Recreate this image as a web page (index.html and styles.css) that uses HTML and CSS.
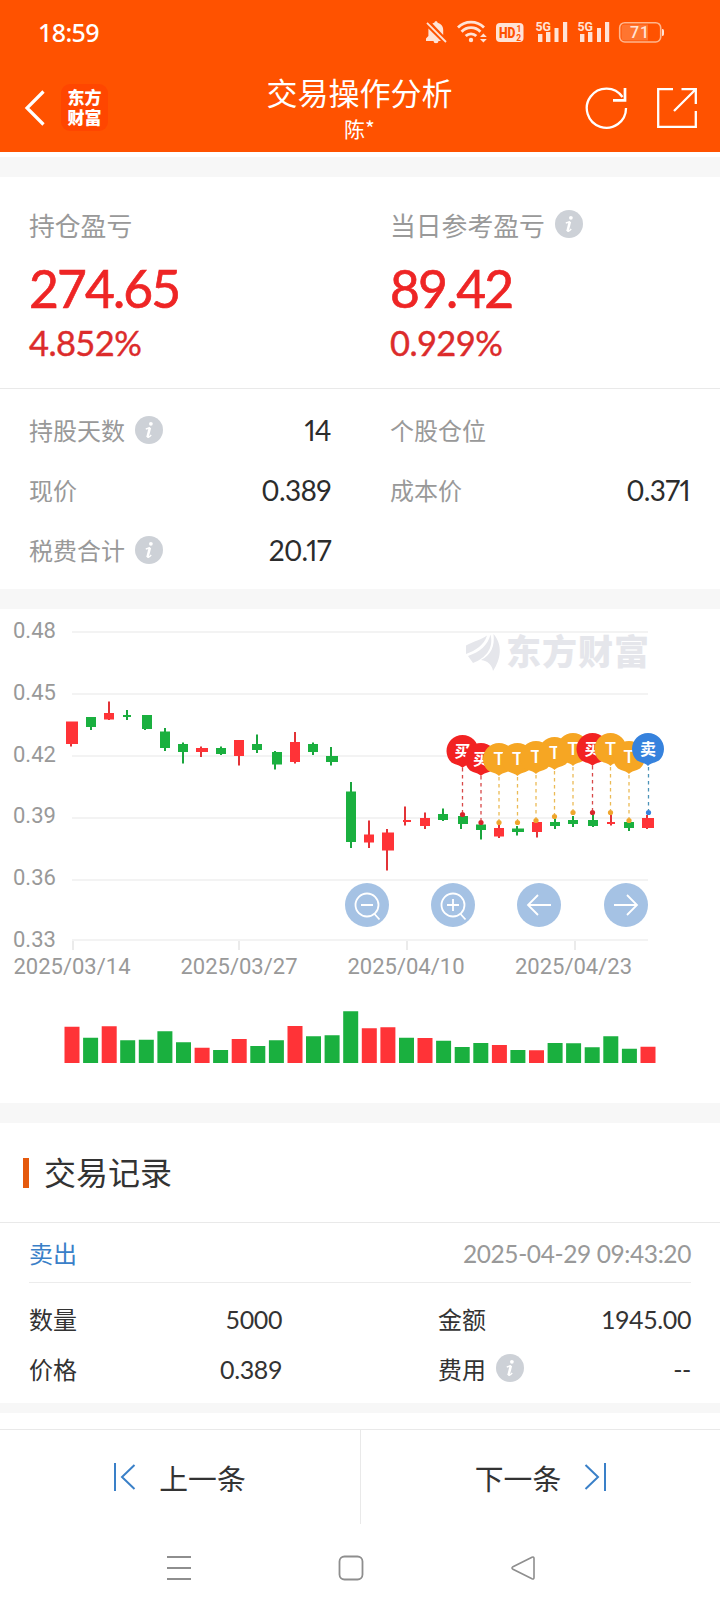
FILE: index.html
```html
<!DOCTYPE html>
<html lang="zh-CN">
<head>
<meta charset="utf-8">
<title>交易操作分析</title>
<link rel="stylesheet" href="styles.css">
</head>
<body>
<svg class="defs" width="0" height="0" aria-hidden="true">
  <defs>
    <symbol id="info" viewBox="0 0 28 28">
      <circle cx="14" cy="14" r="14" fill="#cdd1d7"/>
      <circle cx="15.900" cy="7.800" r="1.900" fill="#fff"/>
      <path d="M10.800 12.900L15 11.800M12.600 20.500Q12.800 22.600 16.200 18.900" fill="none" stroke="#fff" stroke-width="1.500"/>
      <path d="M14.900 11.600L12.500 21.300" fill="none" stroke="#fff" stroke-width="2.500"/>
    </symbol>
    <path id="pin" d="M0 33C-2.500 30-7 30-11 27.600A16 16 0 1 1 11 27.600C7 30 2.500 30 0 33z"/>
  </defs>
</svg>

<header class="header">
  <div class="status">
    <span class="clock">18:59</span>
    <svg class="status-icons" width="250" height="32" viewBox="420 16 250 32">
      <g fill="#ffe3d6">
        <path d="M436 21.200c1 0 1.600.6 1.600 1.500 3.400.9 5.600 3.600 5.600 7v5.300l-10.800-11.600c.6-.4 1.300-.6 2-.7 0-.9.600-1.500 1.600-1.500zM428.400 28.400l12.600 12.600h-15v-2.500l2.400-2.600zM433.500 41h5a2.500 2.200 0 0 1-5 0z"/>
        <path d="M427 22.800l19 19.200" stroke="#ffe3d6" stroke-width="1.800"/>
        <g fill="none" stroke="#ffe3d6" stroke-width="2.800">
          <path d="M458 27.500a18.500 18.500 0 0 1 26 0"/>
          <path d="M461.600 31.700a13 13 0 0 1 18.800 0"/>
          <path d="M465.700 36a7.500 7.500 0 0 1 10.600 0"/>
        </g>
        <circle cx="471" cy="40" r="2.200"/>
        <path d="M480 37l3.400-3.600 3.400 3.600zM480 39l3.400 3.600 3.400-3.600z"/>
        <rect x="496" y="23" width="27.500" height="19" rx="4"/>
        <path d="M538 34h4.400v8H538zM546 32h4.400v10H546zM554.500 28h4v14h-4zM563 22h4.200v20h-4.200zM580 34h4.400v8H580zM588 32h4.400v10H588zM597 28h4v14h-4zM605 22h4.200v20h-4.200z"/>
        <g class="net"><text x="535.500" y="31" textLength="15.500" lengthAdjust="spacingAndGlyphs">5G</text><text x="577.500" y="31" textLength="15.500" lengthAdjust="spacingAndGlyphs">5G</text></g>
        <path d="M662 29c2 0 2 1 2 3.500s0 3.500-2 3.500z"/>
      </g>
      <text class="hd" x="499" y="38" textLength="16.500" lengthAdjust="spacingAndGlyphs">HD</text>
      <text class="hd-sub" x="516.500" y="32">1</text><text class="hd-sub" x="516.300" y="40.800">2</text>
      <rect x="619.700" y="22.700" width="41" height="19.300" rx="5" fill="none" stroke="#ffb68d" stroke-width="1.600"/>
      <path d="M624 24.500h24v16h-24q-2.500 0-2.500-3v-10q0-3 2.500-3z" fill="#ff7530"/>
      <text class="battery" x="640" y="38" text-anchor="middle">71</text>
    </svg>
  </div>
  <div class="bar">
    <div class="bar-left">
      <svg class="back" width="22" height="36" viewBox="0 0 22 36"><path d="M19.500 1.500L3 18L19.500 34.500" fill="none" stroke="#fff" stroke-width="3.200"/></svg>
      <div class="logo"><span>东方</span><span>财富</span></div>
    </div>
    <div class="titles">
      <h1 class="title">交易操作分析</h1>
      <div class="subtitle">陈*</div>
    </div>
    <div class="bar-right">
      <svg width="44" height="44" viewBox="585 86 44 44" fill="none" stroke="#fff" stroke-width="2.300"><path d="M626 108A19.600 19.600 0 1 1 622.500 97"/><path d="M625 88V100.300H613" stroke-width="2.700"/></svg>
      <svg width="42" height="42" viewBox="656 87 42 42" fill="none" stroke="#fff" stroke-width="2.300"><path d="M673 89.200H658.200V126.800H695.800V111M681.500 89.200H695.800V104M695.800 89.200L674 111"/></svg>
    </div>
  </div>
</header>

<section class="summary">
  <div class="profit">
    <div class="profit-col">
      <div class="label-lg">持仓盈亏</div>
      <div class="amount">274.65</div>
      <div class="rate">4.852%</div>
    </div>
    <div class="profit-col">
      <div class="label-lg">当日参考盈亏<svg class="info" width="28" height="28"><use href="#info"/></svg></div>
      <div class="amount">89.42</div>
      <div class="rate">0.929%</div>
    </div>
  </div>
  <div class="stats">
    <div class="stat"><span>持股天数</span><svg class="info" width="28" height="28"><use href="#info"/></svg><b>14</b></div>
    <div class="stat"><span>个股仓位</span></div>
    <div class="stat"><span>现价</span><b>0.389</b></div>
    <div class="stat"><span>成本价</span><b>0.371</b></div>
    <div class="stat"><span>税费合计</span><svg class="info" width="28" height="28"><use href="#info"/></svg><b>20.17</b></div>
  </div>
</section>

<section class="chart">
  <svg class="chart-svg" width="720" height="494" viewBox="0 609 720 494">
    <path d="M72 632H648M72 694H648M72 756H648M72 818H648M72 880H648M72 940H648" stroke="#f3f3f3" stroke-width="2"/>
    <path d="M73 941v9M239 941v9M407 941v9M575 941v9" stroke="#ebebeb" stroke-width="2"/>
    <g class="axis">
      <text x="13" y="638">0.48</text><text x="13" y="700">0.45</text><text x="13" y="762">0.42</text>
      <text x="13" y="823">0.39</text><text x="13" y="885">0.36</text><text x="13" y="947">0.33</text>
      <text x="13.500" y="974" textLength="117">2025/03/14</text><text x="180.500" y="974" textLength="117">2025/03/27</text>
      <text x="347.500" y="974" textLength="117">2025/04/10</text><text x="515" y="974" textLength="117">2025/04/23</text>
    </g>

    <g fill="#e5e6eb">
      <path d="M466 645.500C474 641 481 640 487 635.500C484 645 476 650.500 466 654z"/>
      <path d="M468 656C480 652 488 645 490.500 634.500C494 648 486 658 473 663z"/>
      <path d="M481 660C491 655 495 646 493.500 634C503 645 501 659 493 671C492 665 488 661 481 660z"/>
      <text class="watermark" x="506" y="665" textLength="143">东方财富</text>
    </g>

    <!-- candle wicks -->
    <path d="M71 740V746.500M109 701.500V720M201 746.500V757M239 740V765.500M295 732V763.500M369 820.500V848M387 829V870.500M405 806.500V825.500M425 812.500V829M499 825V838M537 822V837.500M611 815V825.500M647 815V829" stroke="#e23337" stroke-width="2"/>
    <path d="M91 717V730M127 710V720M145 715V730M165 728V751M183 742.500V763.500M221 746.500V755M257 734.500V753M275 751V769.500M313 742.500V755M331 747V765.500M351 782V848M443 808.500V821M461 816V829M481 824V839.500M517 826V835.500M555 818V829M573 816V827M593 815V827M629 822V831" stroke="#1aa53d" stroke-width="2"/>
    <!-- candle bodies -->
    <path d="M66 721.500h12v22.500h-12zM104 713h10v6.500h-10zM196 748h12v4h-12zM234 740h10v16h-10zM290 742h10v20h-10zM364 834.500h10v8h-10zM382 832.500h12v18h-12zM403 820h8v2h-8zM420 818h10v8h-10zM494 828h10v8.500h-10zM532 822h10v10h-10zM607 822h8v2h-8zM642 818h12v10h-12z" fill="#ff3337"/>
    <path d="M86 717h10v10h-10zM123 715h8v2h-8zM142 715h10v14h-10zM160 731.500h10v16.500h-10zM178 744h10v8h-10zM216 748h10v6h-10zM252 744h10v6h-10zM272 752h10v12.500h-10zM308 744h10v8h-10zM326 756h12v6h-12zM346 791.500h10v50.500h-10zM438 814h10v6h-10zM458 816h10v8h-10zM476 824.500h10v5.500h-10zM512 828.500h12v3.500h-12zM550 822h10v4h-10zM568 820h10v4h-10zM588 820h10v6h-10zM624 822h10v6h-10z" fill="#1ab03f"/>

    <!-- trade stems and anchors -->
    <g fill="none" stroke-width="1.300" stroke-dasharray="3.500 3.500">
      <path d="M462.500 768V812M481 776V820M592.500 766V810" stroke="#d84848"/>
      <path d="M499 777V820M517.500 777V820M536 775V818M554.500 771V814M573 767V810M610.500 767V810M629 775V818" stroke="#ebba55"/>
      <path d="M648.500 767V810" stroke="#4d93b8"/>
    </g>
    <g fill="#d8252b"><circle cx="462.500" cy="814.500" r="2.600"/><circle cx="481" cy="822.500" r="2.600"/><circle cx="592.500" cy="812.500" r="2.600"/></g>
    <g fill="#efa52c"><circle cx="499" cy="822.500" r="2.600"/><circle cx="517.500" cy="822.500" r="2.600"/><circle cx="536" cy="820.500" r="2.600"/><circle cx="554.500" cy="816.500" r="2.600"/><circle cx="573" cy="812.500" r="2.600"/><circle cx="610.500" cy="812.500" r="2.600"/><circle cx="629" cy="820.500" r="2.600"/></g>
    <circle cx="648.500" cy="812.500" r="2.600" fill="#3682dd"/>

    <!-- trade pins -->
    <g class="pins">
      <g transform="translate(462.500 735)"><use href="#pin" fill="#f22222"/><text y="21.500">买</text></g>
      <g transform="translate(481 743)"><use href="#pin" fill="#f22222"/><text y="21.500">买</text></g>
      <g transform="translate(499 743)"><use href="#pin" fill="#f6a623"/><text class="t" y="22">T</text></g>
      <g transform="translate(517.500 743)"><use href="#pin" fill="#f6a623"/><text class="t" y="22">T</text></g>
      <g transform="translate(536 741)"><use href="#pin" fill="#f6a623"/><text class="t" y="22">T</text></g>
      <g transform="translate(554.500 737)"><use href="#pin" fill="#f6a623"/><text class="t" y="22">T</text></g>
      <g transform="translate(573 733)"><use href="#pin" fill="#f6a623"/><text class="t" y="22">T</text></g>
      <g transform="translate(592.500 733)"><use href="#pin" fill="#f22222"/><text y="21.500">买</text></g>
      <g transform="translate(610.500 733)"><use href="#pin" fill="#f6a623"/><text class="t" y="22">T</text></g>
      <g transform="translate(629 741)"><use href="#pin" fill="#f6a623"/><text class="t" y="22">T</text></g>
      <g transform="translate(648 733)"><use href="#pin" fill="#3682dd"/><text y="21.500">卖</text></g>
    </g>

    <!-- chart controls -->
    <g fill="#a5c2e4"><circle cx="367" cy="905" r="22"/><circle cx="453" cy="905" r="22"/><circle cx="539" cy="905" r="22"/><circle cx="626" cy="905" r="22"/></g>
    <g fill="none" stroke="#fff" stroke-width="1.800">
      <circle cx="367" cy="905" r="11.500"/><path d="M361 905h12M374.500 914l5 5.500"/>
      <circle cx="453" cy="905" r="11.500"/><path d="M447 905h12M453 899v12M460.500 914l5 5.500"/>
      <path d="M551 905H528M538 895L528 905L538 915"/>
      <path d="M614 905H637M627 895L637 905L627 915"/>
    </g>

    <!-- volume -->
    <path d="M64.500 1026.700h15V1063h-15zM101.700 1026.300h15V1063h-15zM194.600 1047.700h15V1063h-15zM231.700 1039h15V1063h-15zM287.500 1026h15V1063h-15zM361.800 1028.300h15V1063h-15zM380.400 1027.300h15V1063h-15zM417.500 1038h15V1063h-15zM491.900 1045h15V1063h-15zM529 1050.300h15V1063h-15zM640.500 1046.700h15V1063h-15z" fill="#ff3337"/>
    <path d="M83.100 1037.700h15V1063h-15zM120.200 1040.300h15V1063h-15zM138.800 1039.700h15V1063h-15zM157.400 1031.300h15V1063h-15zM176 1042.300h15V1063h-15zM213.100 1050h15V1063h-15zM250.300 1046h15V1063h-15zM268.900 1040.300h15V1063h-15zM306 1036.300h15V1063h-15zM324.600 1035.300h15V1063h-15zM343.200 1011.300h15V1063h-15zM399 1037.700h15V1063h-15zM436.100 1040.700h15V1063h-15zM454.700 1047h15V1063h-15zM473.300 1043h15V1063h-15zM510.400 1050h15V1063h-15zM547.600 1043h15V1063h-15zM566.100 1043.300h15V1063h-15zM584.700 1047.300h15V1063h-15zM603.300 1036.300h15V1063h-15zM621.900 1048.700h15V1063h-15z" fill="#1ab03f"/>
  </svg>
</section>

<section class="records">
  <h2 class="records-title"><i class="mark"></i><span>交易记录</span></h2>
  <div class="record">
    <div class="record-head"><span class="side">卖出</span><time class="time">2025-04-29 09:43:20</time></div>
    <div class="record-grid">
      <div class="field"><span>数量</span><b>5000</b></div>
      <div class="field"><span>金额</span><b>1945.00</b></div>
      <div class="field"><span>价格</span><b>0.389</b></div>
      <div class="field"><span>费用</span><svg class="info" width="28" height="28"><use href="#info"/></svg><b>--</b></div>
    </div>
  </div>
</section>

<nav class="pager">
  <div class="page-link">
    <svg width="22" height="28" viewBox="0 0 22 28" fill="none" stroke="#3a80c8" stroke-width="2"><path d="M1 0V28M20.500 2L8 14L20.500 26"/></svg>
    <span>上一条</span>
  </div>
  <div class="page-link">
    <span>下一条</span>
    <svg width="22" height="28" viewBox="0 0 22 28" fill="none" stroke="#3a80c8" stroke-width="2"><path d="M21 0V28M1.500 2L14 14L1.500 26"/></svg>
  </div>
</nav>

<footer class="system">
  <svg width="26" height="26" viewBox="0 0 26 26" fill="none" stroke="#8e8e8e" stroke-width="1.800"><path d="M1 2H25M1 13H25M1 24H25"/></svg>
  <svg width="26" height="26" viewBox="0 0 26 26" fill="none" stroke="#8e8e8e" stroke-width="1.800"><rect x="1.500" y="1.500" width="23" height="23" rx="5"/></svg>
  <svg width="26" height="26" viewBox="0 0 26 26" fill="none" stroke="#8e8e8e" stroke-width="1.600"><path d="M22 2.200L3 11.700Q1 13 3 14.300L22 23.800Q24 24.600 24 22.500V3.500Q24 1.400 22 2.200z"/></svg>
</footer>
</body>
</html>
```
FILE: styles.css
```css
* { box-sizing: border-box; }
body {
  margin: 0;
  width: 720px;
  height: 1612px;
  overflow: hidden;
  background: #fff;
  color: #333;
  font-family: Lato, "Noto Sans CJK SC", sans-serif;
}
svg { display: block; flex: none; }
.defs { position: absolute; }
b { font-weight: 400; }

.header { height: 152px; background: #ff5200; color: #fff; }
.status { height: 62px; display: flex; justify-content: space-between; align-items: center; padding: 2px 50px 0 38px; }
.clock { font: 500 25px/30px "Noto Sans", sans-serif; letter-spacing: -0.6px; }
.status-icons { font-family: Roboto, sans-serif; }
.net { font-size: 12.5px; font-weight: 700; }
.hd { font-size: 15px; font-weight: 900; fill: #ff5200; }
.hd-sub { font-size: 8.5px; font-weight: 700; fill: #ff5200; }
.battery { font-size: 16px; font-weight: 500; fill: #ffe3d6; letter-spacing: 1px; }

.bar { height: 90px; display: grid; grid-template-columns: 1fr 240px 1fr; padding: 0 22px 0 24px; }
.bar-left { display: flex; align-items: center; gap: 15px; padding-top: 1px; }
.back { margin-top: 1px; }
.logo { width: 47px; height: 47px; display: flex; flex-direction: column; align-items: center; padding-top: 3px; border-radius: 9px; background: #ff4600; font: 900 17px/20px "Noto Sans CJK SC", sans-serif; }
.titles { text-align: center; padding-top: 8px; margin-left: -1.5px; margin-right: 1.5px; }
.title { margin: 0; font: 400 31px/44px "Noto Sans CJK SC", sans-serif; }
.subtitle { margin-top: 1px; font: 400 21px/26px "Noto Sans CJK SC", sans-serif; }
.bar-right { display: flex; justify-content: flex-end; align-items: center; gap: 27px; padding-top: 2px; }

.summary { margin-top: 5px; border-top: 20px solid #f7f7f7; border-bottom: 20px solid #f7f7f7; height: 452px; }
.profit { height: 212px; display: grid; grid-template-columns: 361px 1fr; padding: 29px 29px 0; border-bottom: 1px solid #e9e9e9; }
.label-lg { display: flex; align-items: center; gap: 10px; height: 36px; font-size: 25.8px; color: #999; }
.label-lg .info { margin-bottom: 0; }
.amount { margin-top: 14px; font-size: 51.5px; line-height: 64px; letter-spacing: -1.9px; color: #ee2525; -webkit-text-stroke: 0.7px #ee2525; }
.rate { margin-top: -1px; font-size: 34.5px; line-height: 48px; letter-spacing: -0.6px; color: #dc2b2b; -webkit-text-stroke: 0.4px #dc2b2b; }
.stats { display: grid; grid-template-columns: 302px 300px; column-gap: 59px; grid-auto-rows: 60px; padding: 12px 29px 0; }
.stat { display: flex; align-items: center; color: #999; font-size: 24px; }
.stat span { margin-bottom: 4px; }
.stat .info { margin: 0 0 3px 10px; }
.stat b { margin: 0 0 2px auto; color: #2c2c2c; font-size: 28px; letter-spacing: -0.6px; font-variant-numeric: proportional-nums; }

.chart { height: 514px; border-bottom: 20px solid #f7f7f7; }
.axis { font-family: Roboto, sans-serif; font-size: 22px; fill: #999; }
.watermark { font: 900 35px "Noto Sans CJK SC", sans-serif; }
.pins { font: 700 16px "Noto Sans CJK SC", sans-serif; text-anchor: middle; fill: #fff; }
.pins .t { font: 500 18px Roboto, sans-serif; }

.records { height: 290px; border-bottom: 10px solid #f7f7f7; }
.records-title { display: flex; align-items: center; gap: 15px; height: 100px; margin: 0; padding: 0 0 0 23px; border-bottom: 1px solid #e9e9e9; font-size: 32px; font-weight: 400; }
.records-title span { margin-bottom: 3px; }
.mark { width: 6px; height: 30px; background: #e5590d; }
.record { padding: 0 29px; }
.record-head { display: flex; align-items: center; justify-content: space-between; height: 60px; padding-top: 2px; border-bottom: 1px solid #ececec; font-size: 24px; }
.side { color: #3a80c8; margin-bottom: 3px; }
.time { color: #999; font-size: 24.5px; letter-spacing: -0.4px; }
.record-grid { display: grid; grid-template-columns: 253px 253px; justify-content: space-between; grid-auto-rows: 50px; padding-top: 13px; }
.field { display: flex; align-items: center; font-size: 24px; }
.field span { margin-bottom: 6px; }
.field b { margin: 0 0 4px auto; font-size: 25px; letter-spacing: -0.4px; }
.field .info { margin: 0 0 6px 10px; }

.pager { display: grid; grid-template-columns: 1fr 1fr; margin-top: 16px; height: 95px; border-top: 1px solid #e9e9e9; }
.page-link { display: flex; align-items: center; justify-content: center; gap: 23px; font-size: 28.8px; }
.page-link + .page-link { border-left: 1px solid #e9e9e9; }
.system { display: flex; justify-content: space-between; padding: 31px 184px 0 166px; }
```
